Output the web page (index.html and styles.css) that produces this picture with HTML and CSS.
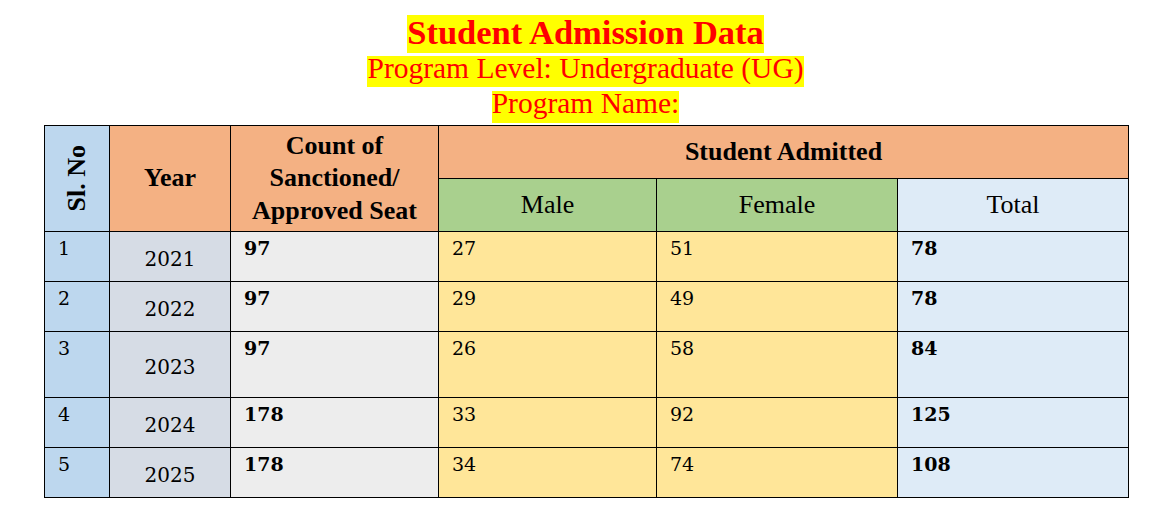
FILE: index.html
```html
<!DOCTYPE html>
<html lang="en">
<head>
<meta charset="utf-8">
<title>Student Admission Data</title>
<link rel="stylesheet" href="styles.css">
</head>
<body>
<div class="page">
  <header class="titles">
    <div class="line"><span class="hl t1">Student Admission Data</span></div>
    <div class="line"><span class="hl t2">Program Level: Undergraduate (UG)</span></div>
    <div class="line"><span class="hl t3">Program Name:</span></div>
  </header>
  <table class="data">
    <colgroup>
      <col class="c-sl">
      <col class="c-year">
      <col class="c-seat">
      <col class="c-male">
      <col class="c-female">
      <col class="c-total">
    </colgroup>
    <thead>
      <tr class="h1">
        <th rowspan="2" class="th-sl"><div class="rot">Sl. No</div></th>
        <th rowspan="2" class="th-or">Year</th>
        <th rowspan="2" class="th-or th-seat">Count of<br>Sanctioned/<br>Approved Seat</th>
        <th colspan="3" class="th-or">Student Admitted</th>
      </tr>
      <tr class="h2">
        <th class="th-gr">Male</th>
        <th class="th-gr">Female</th>
        <th class="th-tot">Total</th>
      </tr>
    </thead>
    <tbody>
      <tr class="r">
        <td class="sl">1</td><td class="yr">2021</td><td class="seat">97</td><td class="mf">27</td><td class="mf">51</td><td class="tot">78</td>
      </tr>
      <tr class="r">
        <td class="sl">2</td><td class="yr">2022</td><td class="seat">97</td><td class="mf">29</td><td class="mf">49</td><td class="tot">78</td>
      </tr>
      <tr class="r tall">
        <td class="sl">3</td><td class="yr">2023</td><td class="seat">97</td><td class="mf">26</td><td class="mf">58</td><td class="tot">84</td>
      </tr>
      <tr class="r">
        <td class="sl">4</td><td class="yr">2024</td><td class="seat">178</td><td class="mf">33</td><td class="mf">92</td><td class="tot">125</td>
      </tr>
      <tr class="r">
        <td class="sl">5</td><td class="yr">2025</td><td class="seat">178</td><td class="mf">34</td><td class="mf">74</td><td class="tot">108</td>
      </tr>
    </tbody>
  </table>
</div>
</body>
</html>
```
FILE: styles.css
```css
html, body {
  margin: 0;
  padding: 0;
  background: #ffffff;
}
.page {
  width: 1171px;
  padding-top: 15px;
}
.titles {
  text-align: center;
  font-family: "Liberation Serif", "Times New Roman", serif;
  color: #ff0000;
}
.line {
  display: block;
  line-height: 0;
}
.hl {
  display: inline-block;
  background: #ffff00;
  vertical-align: top;
}
.t1 {
  font-size: 34.5px;
  font-weight: bold;
  line-height: 35px;
  padding-bottom: 3px;
  margin-bottom: 3px;
}
.t2 {
  font-size: 29.5px;
  line-height: 25px;
  padding-bottom: 6px;
  margin-bottom: 4px;
}
.t3 {
  font-size: 29.5px;
  line-height: 25px;
  padding-bottom: 7px;
  margin-bottom: 2px;
}
.data {
  width: 1084px;
  margin: 0 0 0 44px;
  border-collapse: collapse;
  table-layout: fixed;
  color: #000;
}
.c-sl { width: 65px; }
.c-year { width: 121px; }
.c-seat { width: 208px; }
.c-male { width: 218px; }
.c-female { width: 241px; }
.c-total { width: 231px; }
.data th, .data td {
  border: 1px solid #000;
  padding: 0;
}
.data th {
  font-family: "Liberation Serif", "Times New Roman", serif;
  font-size: 26px;
  font-weight: bold;
  text-align: center;
  vertical-align: middle;
  line-height: 32.5px;
}
.h1 { height: 53px; }
.h2 { height: 53px; }
.data th.th-sl { background: #bdd7ee; }
.data th.th-or { background: #f4b183; }
.data th.th-gr { background: #a9d08e; font-weight: normal; }
.data th.th-tot { background: #deebf7; font-weight: normal; }
.rot {
  writing-mode: vertical-rl;
  transform: rotate(180deg);
  margin: 0 auto;
  line-height: 26px;
  white-space: nowrap;
}
.r { height: 50px; }
.r.tall { height: 66px; }
.data td {
  font-family: "DejaVu Serif", "Liberation Serif", serif;
  font-size: 19px;
  line-height: 22px;
  vertical-align: top;
  text-align: left;
  padding: 5px 8px 0 13px;
}
.data td.sl { background: #bdd7ee; }
.data td.yr {
  background: #d6dce5;
  text-align: center;
  vertical-align: middle;
  padding: 4px 0 0 0;
  font-size: 20px;
}
.data td.seat { background: #ededed; font-weight: bold; font-size: 19px; }
.data td.mf { background: #ffe699; }
.data td.tot { background: #deebf7; font-weight: bold; font-size: 19px; }
```
